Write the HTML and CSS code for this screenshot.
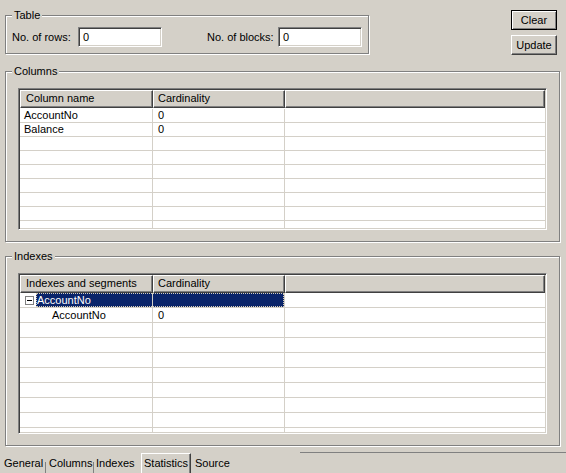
FILE: index.html
```html
<!DOCTYPE html>
<html>
<head>
<meta charset="utf-8">
<title>Statistics</title>
<link rel="stylesheet" href="styles.css">
</head>
<body>
<div class="window">
  <div class="top">
    <fieldset class="group group-table">
      <legend>Table</legend>
      <div class="table-fields">
        <span class="lbl lbl-rows">No. of rows:</span>
        <div class="edit">0</div>
        <span class="lbl lbl-blocks">No. of blocks:</span>
        <div class="edit">0</div>
      </div>
    </fieldset>
    <div class="buttons">
      <button class="btn btn-default">Clear</button>
      <button class="btn">Update</button>
    </div>
  </div>

  <fieldset class="group group-wide group-columns">
    <legend>Columns</legend>
    <div class="group-body">
      <div class="grid grid-columns">
        <div class="grid-head">
          <div class="hcell">Column name</div>
          <div class="hcell">Cardinality</div>
          <div class="hcell"></div>
        </div>
        <div class="grid-rows">
          <div class="grow"><div class="gcell">AccountNo</div><div class="gcell">0</div><div class="gcell last"></div></div>
          <div class="grow"><div class="gcell">Balance</div><div class="gcell">0</div><div class="gcell last"></div></div>
          <div class="grow"><div class="gcell"></div><div class="gcell"></div><div class="gcell last"></div></div>
          <div class="grow"><div class="gcell"></div><div class="gcell"></div><div class="gcell last"></div></div>
          <div class="grow"><div class="gcell"></div><div class="gcell"></div><div class="gcell last"></div></div>
          <div class="grow"><div class="gcell"></div><div class="gcell"></div><div class="gcell last"></div></div>
          <div class="grow"><div class="gcell"></div><div class="gcell"></div><div class="gcell last"></div></div>
          <div class="grow"><div class="gcell"></div><div class="gcell"></div><div class="gcell last"></div></div>
          <div class="grow"><div class="gcell"></div><div class="gcell"></div><div class="gcell last"></div></div>
        </div>
      </div>
    </div>
  </fieldset>

  <fieldset class="group group-wide group-indexes">
    <legend>Indexes</legend>
    <div class="group-body">
      <div class="grid grid-indexes">
        <div class="grid-head">
          <div class="hcell">Indexes and segments</div>
          <div class="hcell">Cardinality</div>
          <div class="hcell"></div>
        </div>
        <div class="grid-rows">
          <div class="grow sel">
            <div class="gcell tree">
              <svg class="tbox" width="9" height="9" viewBox="0 0 9 9"><rect x="0.5" y="0.5" width="8" height="8" fill="#fff" stroke="#808080"/><path d="M2 4.5h5" stroke="#000"/></svg>
              <span class="sel-text">AccountNo</span>
            </div>
            <div class="gcell"><span class="sel-fill"></span></div>
            <div class="gcell last"></div>
          </div>
          <div class="grow"><div class="gcell sub">AccountNo</div><div class="gcell">0</div><div class="gcell last"></div></div>
          <div class="grow"><div class="gcell"></div><div class="gcell"></div><div class="gcell last"></div></div>
          <div class="grow"><div class="gcell"></div><div class="gcell"></div><div class="gcell last"></div></div>
          <div class="grow"><div class="gcell"></div><div class="gcell"></div><div class="gcell last"></div></div>
          <div class="grow"><div class="gcell"></div><div class="gcell"></div><div class="gcell last"></div></div>
          <div class="grow"><div class="gcell"></div><div class="gcell"></div><div class="gcell last"></div></div>
          <div class="grow"><div class="gcell"></div><div class="gcell"></div><div class="gcell last"></div></div>
          <div class="grow"><div class="gcell"></div><div class="gcell"></div><div class="gcell last"></div></div>
          <div class="grow"><div class="gcell"></div><div class="gcell"></div><div class="gcell last"></div></div>
        </div>
      </div>
    </div>
  </fieldset>

  <div class="tabs">
    <div class="tab tab-general">General</div>
    <span class="sep"></span>
    <div class="tab tab-columns">Columns</div>
    <span class="sep"></span>
    <div class="tab tab-indexes">Indexes</div>
    <div class="tab tab-active">Statistics</div>
    <div class="tab tab-source">Source</div>
    <div class="tab-line"></div>
  </div>
</div>
</body>
</html>
```

FILE: styles.css
```css
* { box-sizing: border-box; }
html, body { margin: 0; padding: 0; }
body {
  width: 566px;
  height: 473px;
  overflow: hidden;
  background: #d4d0c8;
  color: #000;
  font-family: "Liberation Sans", Arial, sans-serif;
  font-size: 11px;
  line-height: 13px;
}

.top {
  display: flex;
  align-items: flex-start;
  height: 55px;
}

.group {
  margin: 0;
  padding: 0;
  min-width: 0;
  border: 1px solid #808080;
  box-shadow: inset 1px 1px 0 #fff, 1px 1px 0 #fff;
}
.group legend {
  margin-left: 6px;
  padding: 0 2px;
  line-height: 13px;
  background: #d4d0c8;
}

.group-table {
  margin: 9px 0 0 5px;
  width: 364px;
}
.table-fields {
  display: flex;
  align-items: center;
  padding: 5px 0 6px 6px;
}
.lbl { white-space: nowrap; }
.lbl-rows { width: 66px; }
.lbl-blocks { width: 71px; margin-left: 45px; }
.edit {
  width: 84px;
  height: 20px;
  background: #fff;
  border: 1px solid;
  border-color: #808080 #fff #fff #808080;
  box-shadow: inset 1px 1px 0 #404040, inset -1px -1px 0 #d4d0c8;
  padding-left: 4px;
  line-height: 18px;
}

.buttons {
  margin-left: auto;
  margin-right: 9px;
  padding-top: 10px;
  display: flex;
  flex-direction: column;
  gap: 5px;
}
.btn {
  width: 46px;
  height: 20px;
  padding: 0;
  font: inherit;
  color: #000;
  background: #d4d0c8;
  border: 1px solid;
  border-color: #fff #404040 #404040 #fff;
  box-shadow: inset -1px -1px 0 #808080, inset 1px 1px 0 #d4d0c8;
}
.btn-default {
  border-color: #000;
  box-shadow: inset 1px 1px 0 #fff, inset -1px -1px 0 #808080;
}

.group-wide { width: 555px; margin-left: 5px; }
.group-columns { margin-top: 10px; }
.group-indexes { margin-top: 8px; }
.group-body { padding: 10px 12px 11px 12px; }

.grid {
  border: 1px solid;
  border-color: #808080 #fff #fff #808080;
  box-shadow: inset 1px 1px 0 #404040, inset -1px -1px 0 #d4d0c8;
  padding: 1px;
  background: #fff;
  overflow: hidden;
}
.grid-columns { height: 142px; }
.grid-indexes { height: 161px; }

.grid-head, .grow {
  display: grid;
  grid-template-columns: 133px 132px 1fr;
}
.hcell {
  height: 18px;
  background: #d4d0c8;
  border: 1px solid;
  border-color: #fff #404040 #404040 #fff;
  box-shadow: inset -1px -1px 0 #808080;
  padding: 1px 0 0 5px;
  white-space: nowrap;
  overflow: hidden;
}
.hcell + .hcell { padding-left: 4px; }

.grid-columns .grid-rows { padding-top: 1px; }
.grow { height: 14px; }
.grid-indexes .grow { height: 15px; }

.gcell {
  border-right: 1px solid #d4d0c8;
  border-bottom: 1px solid #d4d0c8;
  padding-left: 4px;
  white-space: nowrap;
  overflow: hidden;
}
.gcell + .gcell { padding-left: 5px; }
.gcell.last { border-right: 0; }
.grid-indexes .gcell { padding-top: 1px; }
.grid-indexes .gcell.sub { padding-left: 32px; }

.grid-indexes .sel .gcell { padding: 0; }
.tree {
  display: flex;
  align-items: center;
}
.grid-indexes .sel .tree { padding-left: 5px; }
.tbox { display: block; margin-right: 2px; flex: none; }
.sel-text {
  flex: 1;
  align-self: stretch;
  background: #0a246a;
  color: #fff;
  border: 1px dotted #d8d0b8;
  border-right: 0;
  line-height: 12px;
}
.sel-fill {
  display: block;
  height: 100%;
  background: #0a246a;
  border: 1px dotted #d8d0b8;
  border-left: 0;
}

.tabs {
  display: flex;
  height: 27px;
  padding-top: 7px;
}
.tab {
  height: 20px;
  padding-top: 4px;
  white-space: nowrap;
}
.tab-general { width: 45px; padding-left: 4px; }
.tab-columns { width: 47px; padding-left: 3px; }
.tab-indexes { width: 47px; padding-left: 2px; }
.tab-active {
  width: 50px;
  padding: 3px 0 0 2px;
  border-top: 1px solid #fff;
  border-left: 1px solid #fff;
  border-right: 1px solid #404040;
  box-shadow: inset -1px 0 0 #808080;
}
.tab-source { padding-left: 4px; }
.sep {
  width: 1px;
  height: 11px;
  align-self: flex-end;
  background: #808080;
}
.tab-line {
  flex: 1;
  align-self: flex-start;
  margin-top: -1px;
  margin-left: 70px;
  height: 1px;
  background: #808080;
}
```
